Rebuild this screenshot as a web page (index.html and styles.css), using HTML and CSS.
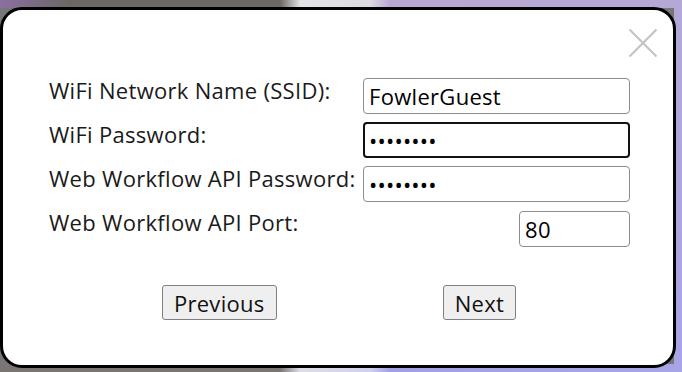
FILE: index.html
```html
<!DOCTYPE html>
<html lang="en">
<head>
    <meta charset="UTF-8">
    <meta name="viewport" content="width=device-width, initial-scale=1.0">
    <title>WiFi Setup</title>
    <link rel="stylesheet" href="styles.css">
</head>
<body>
    <div class="backdrop">
        <div class="dialog">
            <button class="close-button" aria-label="Close">
                <svg width="28" height="28" viewBox="0 0 28 28">
                    <path d="M0.5 0.5 L27.5 27.5 M27.5 0.5 L0.5 27.5" stroke="#c4c4c4" stroke-width="2.2" fill="none"/>
                </svg>
            </button>

            <div class="settings-grid">
                <label for="ssid">WiFi Network Name (SSID):</label>
                <input type="text" id="ssid" value="FowlerGuest">

                <label for="wifiPassword">WiFi Password:</label>
                <input type="password" id="wifiPassword" class="focused" value="password">

                <label for="apiPassword">Web Workflow API Password:</label>
                <input type="password" id="apiPassword" value="password">

                <label for="apiPort">Web Workflow API Port:</label>
                <input type="number" id="apiPort" class="port-input" value="80">
            </div>

            <div class="button-row">
                <button class="nav-button">Previous</button>
                <button class="nav-button">Next</button>
            </div>
        </div>
    </div>
</body>
</html>
```

FILE: styles.css
```css
body {
    margin: 0;
    padding: 0;
    font-family: 'Open Sans', 'Lato', sans-serif;
    color: #1a1a1a;
    overflow: hidden;
}

.backdrop {
    width: 682px;
    height: 372px;
    padding: 7px 6px 4px 0;
    box-sizing: border-box;
    background:
        linear-gradient(to right, #8d6fa0 0px, #6b6865 70px, #6b6865 280px, #e4e2e6 300px, #dcdadf 370px, #b9a9d2 390px, #b4a8d6 682px) top / 100% 8px no-repeat,
        linear-gradient(to right, #7a7572 0px, #7a7572 280px, #dedde6 300px, #d0d0ee 370px, #a2a0e4 390px, #a8a4e8 682px) bottom / 100% 8px no-repeat,
        linear-gradient(to bottom, #b4a8d6, #a8a4e8) right / 8px 100% no-repeat,
        #777;
}

.dialog {
    position: relative;
    height: 100%;
    background: white;
    border: 3px solid #000;
    border-radius: 22px;
    box-sizing: border-box;
    padding: 68px 46px 0 46px;
}

.close-button {
    position: absolute;
    top: 19px;
    right: 16px;
    padding: 0;
    border: none;
    background: none;
    width: 28px;
    height: 28px;
    cursor: pointer;
}

.close-button svg {
    display: block;
}

.settings-grid {
    display: grid;
    grid-template-columns: 314px 267px;
    row-gap: 8px;
    align-items: start;
}

.settings-grid label {
    font-size: 22px;
    line-height: 24px;
    letter-spacing: 0.3px;
}

.settings-grid input {
    font-family: inherit;
    font-size: 22px;
    letter-spacing: 0.3px;
    color: #000;
    height: 36px;
    padding: 0 5px;
    border: 1px solid #8c8c8c;
    border-radius: 4px;
    box-sizing: border-box;
    width: 100%;
    outline: none;
}

.settings-grid input[type="password"] {
    letter-spacing: 0.2px;
}

.settings-grid input.focused {
    border: 2px solid #111;
    padding: 0 4px;
}

.settings-grid .port-input {
    width: 111px;
    justify-self: end;
    margin-top: 1px;
    -moz-appearance: textfield;
}

.port-input::-webkit-inner-spin-button,
.port-input::-webkit-outer-spin-button {
    -webkit-appearance: none;
    margin: 0;
}

.button-row {
    display: flex;
    justify-content: center;
    gap: 166px;
    margin-top: 38px;
    padding-left: 2px;
}

.nav-button {
    font-family: inherit;
    font-size: 22px;
    letter-spacing: 0.3px;
    color: #111;
    background-color: #efefef;
    border: 1px solid #808080;
    border-radius: 3px;
    height: 35px;
    padding: 0 11px;
    cursor: pointer;
}

.nav-button:hover {
    background-color: #e5e5e5;
}
```
